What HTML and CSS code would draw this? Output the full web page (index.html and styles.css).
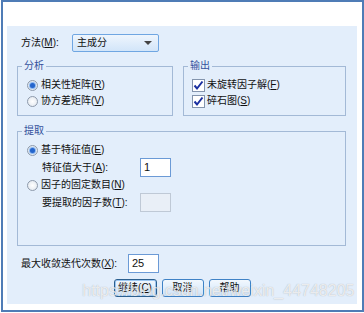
FILE: index.html
```html
<!DOCTYPE html>
<html lang="zh-CN">
<head>
    <meta charset="UTF-8">
    <title>因子分析：提取</title>
    <link rel="stylesheet" href="styles.css">
</head>
<body>
    <div class="window">
        <div class="panel">
            <div class="method">
                <label class="method-label">方法(<u>M</u>):</label>
                <div class="select">
                    <span>主成分</span>
                    <span class="arrow"></span>
                </div>
            </div>

            <div class="groups">
                <fieldset class="group analyze">
                    <legend>分析</legend>
                    <div class="opt"><span class="radio on"></span>相关性矩阵(<u>R</u>)</div>
                    <div class="opt"><span class="radio"></span>协方差矩阵(<u>V</u>)</div>
                </fieldset>
                <fieldset class="group output">
                    <legend>输出</legend>
                    <div class="opt"><span class="check"><svg viewBox="0 0 13 13" width="13" height="13"><path d="M2.5 6.5 L5 9.5 L10.5 2.5" fill="none" stroke="#1a2fa0" stroke-width="2"/></svg></span>未旋转因子解(<u>F</u>)</div>
                    <div class="opt"><span class="check"><svg viewBox="0 0 13 13" width="13" height="13"><path d="M2.5 6.5 L5 9.5 L10.5 2.5" fill="none" stroke="#1a2fa0" stroke-width="2"/></svg></span>碎石图(<u>S</u>)</div>
                </fieldset>
            </div>

            <fieldset class="group extract">
                <legend>提取</legend>
                <div class="opt"><span class="radio on"></span>基于特征值(<u>E</u>)</div>
                <div class="sub">
                    <label>特征值大于(<u>A</u>):</label>
                    <div class="field">1</div>
                </div>
                <div class="opt"><span class="radio"></span>因子的固定数目(<u>N</u>)</div>
                <div class="sub">
                    <label>要提取的因子数(<u>T</u>):</label>
                    <div class="field off"></div>
                </div>
            </fieldset>

            <div class="iter">
                <label>最大收敛迭代次数(<u>X</u>):</label>
                <div class="field">25</div>
            </div>

            <div class="buttons">
                <button class="btn default">继续(<u>C</u>)</button>
                <button class="btn">取消</button>
                <button class="btn">帮助</button>
            </div>
        </div>
        <div class="watermark">https://blog.csdn.net/weixin_44748205</div>
    </div>
</body>
</html>
```

FILE: styles.css
```css
* {
    box-sizing: border-box;
    font-family: "Liberation Sans", "Noto Sans CJK SC", sans-serif;
}

body {
    margin: 0;
    background: #fff;
    font-size: 10px;
    line-height: 16px;
    color: #111;
}

label {
    white-space: nowrap;
    flex-shrink: 0;
}

u {
    text-decoration: underline;
    text-underline-offset: 1px;
}

.window {
    position: relative;
    width: 363px;
    height: 312px;
    margin-left: 1px;
    border: 2px solid #4f7cb6;
    background: #fff;
    padding: 24px 0 0 4px;
}

.panel {
    width: 350px;
    height: 278px;
    background: #e3eefb;
    padding: 8px 0 0 10px;
    display: flex;
    flex-direction: column;
}

.method {
    display: flex;
    align-items: center;
    height: 18px;
    padding-left: 4px;
}

.method-label {
    width: 51px;
}

.select {
    width: 87px;
    height: 18px;
    border: 1px solid #6fa6e2;
    border-radius: 2px;
    background: linear-gradient(#eef5fd, #d2e5f9);
    display: flex;
    align-items: center;
    justify-content: space-between;
    padding: 0 6px 0 4px;
}

.arrow {
    width: 0;
    height: 0;
    border-left: 4px solid transparent;
    border-right: 4px solid transparent;
    border-top: 4px solid #444;
}

.groups {
    display: flex;
    gap: 10px;
    margin-top: 7px;
}

.group {
    margin: 0;
    min-width: 0;
    border: 1px solid #a3b9d6;
    padding: 4px 4px 6px 4px;

    >legend {
        padding: 0 2px;
        line-height: 14px;
        color: #34519c;
    }
}

.analyze {
    width: 156px;
}

.output {
    width: 163px;
}

.opt {
    display: flex;
    align-items: center;
    height: 16px;
    padding-left: 5px;
    white-space: nowrap;
}

.radio {
    flex-shrink: 0;
    width: 11px;
    height: 11px;
    border-radius: 50%;
    border: 1px solid #8e9aab;
    background: radial-gradient(#fff, #dde4ec);
    margin-right: 3px;
    position: relative;

    &.on::after {
        content: "";
        position: absolute;
        left: 2px;
        top: 2px;
        width: 5px;
        height: 5px;
        border-radius: 50%;
        background: #2565cc;
        box-shadow: 0 0 1px 1px #7fb0ef;
    }
}

.output .opt {
    padding-left: 4px;
}

.check {
    flex-shrink: 0;
    width: 13px;
    height: 13px;
    border: 1px solid #8394ad;
    background: #fff;
    margin-right: 2px;
    display: flex;

    svg {
        margin: -1px;
    }
}

.extract {
    width: 329px;
    margin-top: 8px;
    padding-bottom: 33px;
}

.sub {
    display: flex;
    align-items: center;
    height: 19px;
    padding-left: 20px;

    label {
        width: 98px;
    }
}

.field {
    flex-shrink: 0;
    width: 31px;
    height: 19px;
    border: 1px solid #6b9ad6;
    background: #fff;
    padding-left: 3px;
    line-height: 17px;
    font-size: 11px;

    &.off {
        border-color: #bfc9d6;
        background: #e9eff7;
    }
}

.iter {
    display: flex;
    align-items: center;
    margin-top: 8px;
    padding-left: 4px;

    label {
        width: 107px;
    }
}

.buttons {
    display: flex;
    justify-content: center;
    gap: 5px;
    margin-top: 6px;
    padding-right: 10px;
}

.btn {
    width: 42px;
    height: 18px;
    padding: 0;
    font-size: 10px;
    line-height: 16px;
    color: #111;
    border: 1px solid #3f82c6;
    border-radius: 3px;
    background: linear-gradient(#f2f8fe, #cfe3f8);
    white-space: nowrap;

    &.default {
        width: 43px;
        border-color: #2b5f8f;
        box-shadow: inset 0 0 0 1px #9cc6f0;
    }
}

.watermark {
    position: absolute;
    left: 79px;
    top: 281px;
    font-family: "Liberation Sans", sans-serif;
    font-size: 16px;
    color: rgba(255, 255, 255, 0.75);
    text-shadow: 0 0 1px rgba(90, 90, 90, 0.45);
    white-space: nowrap;
}
```
